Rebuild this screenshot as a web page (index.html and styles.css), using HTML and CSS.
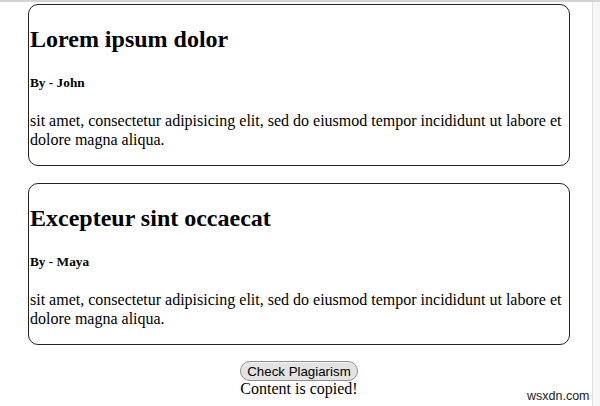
FILE: index.html
```html
<!DOCTYPE html>
<html>
<head>
<meta charset="utf-8">
<link rel="stylesheet" href="styles.css">
</head>
<body>
<div class="frame">
  <main class="page">
    <div class="card">
      <h2>Lorem ipsum dolor</h2>
      <h5>By - John</h5>
      <p>sit amet, consectetur adipisicing elit, sed do eiusmod tempor incididunt ut labore et dolore magna aliqua.</p>
    </div>
    <div class="card">
      <h2>Excepteur sint occaecat</h2>
      <h5>By - Maya</h5>
      <p>sit amet, consectetur adipisicing elit, sed do eiusmod tempor incididunt ut labore et dolore magna aliqua.</p>
    </div>
    <div class="actions">
      <button class="check">Check Plagiarism</button>
      <div class="status">Content is copied!</div>
    </div>
  </main>
  <div class="sidebar"></div>
</div>
<span class="watermark">wsxdn.com</span>
</body>
</html>
```

FILE: styles.css
```css
html, body {
  margin: 0;
  padding: 0;
  background: #fff;
}
body {
  font-family: "Liberation Serif", "Times New Roman", serif;
  color: #000;
  width: 600px;
  height: 406px;
  overflow: hidden;
  position: relative;
}
.frame {
  display: flex;
  height: 406px;
  border-top: 2px solid #d4d4d4;
  box-sizing: border-box;
}
.page {
  width: 592px;
  padding: 2px 0 0 28px;
  box-sizing: border-box;
}
.sidebar {
  flex: 1;
  background: #f6f6f6;
  border-left: 1px solid #e2e2e2;
}
.card {
  width: 542px;
  box-sizing: border-box;
  border: 1px solid #222;
  border-radius: 10px;
  margin-bottom: 17px;
  padding-left: 1px;
}
.card h2 {
  font-size: 24px;
  line-height: 28px;
  margin: 20px 0 22px;
}
.card h5 {
  font-size: 13.3px;
  line-height: 15px;
  margin: 0 0 22px;
}
.card p {
  font-size: 16px;
  line-height: 18.5px;
  margin: 0 0 16px;
}
.actions {
  width: 542px;
  text-align: center;
  margin-top: -1px;
}
.check {
  font-family: "Liberation Sans", Arial, sans-serif;
  font-size: 13.3px;
  color: #000;
  background: #e3e3e3;
  border: 1px solid #8f8f8f;
  border-radius: 10px;
  padding: 1px 6px;
  height: 20px;
  box-shadow: inset 0 1px 0 #f3f3f3;
}
.status {
  font-size: 16px;
  line-height: 17px;
  margin-top: -1px;
}
.watermark {
  position: absolute;
  left: 527px;
  top: 389px;
  font-family: "Liberation Sans", Arial, sans-serif;
  font-size: 12.5px;
  color: #222;
}
```
